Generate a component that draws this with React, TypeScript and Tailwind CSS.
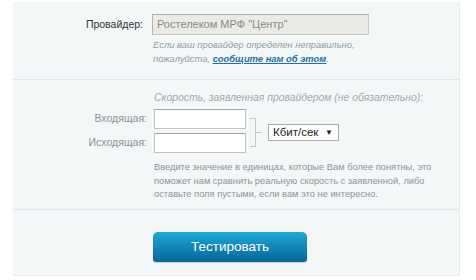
import React from "react";

export default function App() {
  return (
    <div className="w-[476px] h-[280px] bg-white pl-[13px] pt-[2px]" style={{ fontFamily: '"Liberation Sans", Arial, sans-serif' }}>
      <div className="w-[447px] h-[274px] bg-[#f3f7f8] border-r border-b border-[#e6ebed] flex flex-col">
        {/* Section 1 */}
        <div className="h-[78px] shrink-0 border-b border-[#e1e7ea] pt-[12px]">
          <div className="flex items-center">
            <div className="w-[130px] text-right text-[10.5px] text-[#333] whitespace-nowrap">Провайдер:</div>
            <div className="ml-[9px] w-[217px] h-[21px] bg-[#ebeae5] border border-[#c9c7c0] border-t-[#b5b3ad] border-l-[#b5b3ad] flex items-center pl-[4px] text-[11px] text-[#8a8a8a] whitespace-nowrap">
              Ростелеком МРФ "Центр"
            </div>
          </div>
          <div className="ml-[140px] mt-[3px] text-[9.4px] leading-[14px] italic text-[#959ba0] whitespace-nowrap">
            Если ваш провайдер определен неправильно,
            <br />
            пожалуйста,{" "}
            <a className="text-[#1f6fa3] underline font-semibold">сообщите нам об этом</a>.
          </div>
        </div>
        {/* Section 2 */}
        <div className="h-[130px] shrink-0 border-b border-[#e1e7ea] pt-[10px]">
          <div className="ml-[141px] text-[10.4px] italic text-[#a3a8ac] leading-[15px] whitespace-nowrap">
            Скорость, заявленная провайдером (не обязательно):
          </div>
          <div className="flex mt-[4px]">
            <div className="flex flex-col gap-[4px]">
              <div className="flex items-center">
                <div className="w-[134px] text-right text-[10.5px] text-[#8c9194] whitespace-nowrap">Входящая:</div>
                <div className="ml-[7px] w-[92px] h-[20px] bg-white border border-[#bfc3c5] border-t-[#9ea2a4]" />
              </div>
              <div className="flex items-center">
                <div className="w-[134px] text-right text-[10.5px] text-[#8c9194] whitespace-nowrap">Исходящая:</div>
                <div className="ml-[7px] w-[92px] h-[20px] bg-white border border-[#bfc3c5] border-t-[#9ea2a4]" />
              </div>
            </div>
            <div className="ml-[4px] mt-[9px] flex items-center self-start">
              <div className="w-[6px] h-[29px] border-t border-r border-b border-[#c2c7ca]" />
              <div className="w-[6px] h-px bg-[#c2c7ca]" />
              <div className="ml-[6px] w-[71px] h-[17px] bg-white border border-[#a9adb0] flex items-center pl-[4px] pr-[5px] text-[11.5px] text-[#222] leading-none whitespace-nowrap">
                <span>Кбит/сек</span>
                <span className="ml-auto text-[8px]">▼</span>
              </div>
            </div>
          </div>
          <div className="ml-[141px] mt-[8px] text-[9.3px] leading-[13.5px] text-[#8e9397] whitespace-nowrap">
            Введите значение в единицах, которые Вам более понятны, это
            <br />
            поможет нам сравнить реальную скорость с заявленной, либо
            <br />
            оставьте поля пустыми, если вам это не интересно.
          </div>
        </div>
        {/* Section 3 */}
        <div className="flex-1 pt-[22px] pl-[140px]">
          <button className="w-[154px] h-[30px] rounded-t-[5px] rounded-b-[3px] bg-gradient-to-b from-[#1fa9d2] to-[#07679a] text-white text-[13.5px] flex items-center justify-center shadow-[0_1px_1px_rgba(0,0,0,0.15)]">
            Тестировать
          </button>
        </div>
      </div>
    </div>
  );
}
